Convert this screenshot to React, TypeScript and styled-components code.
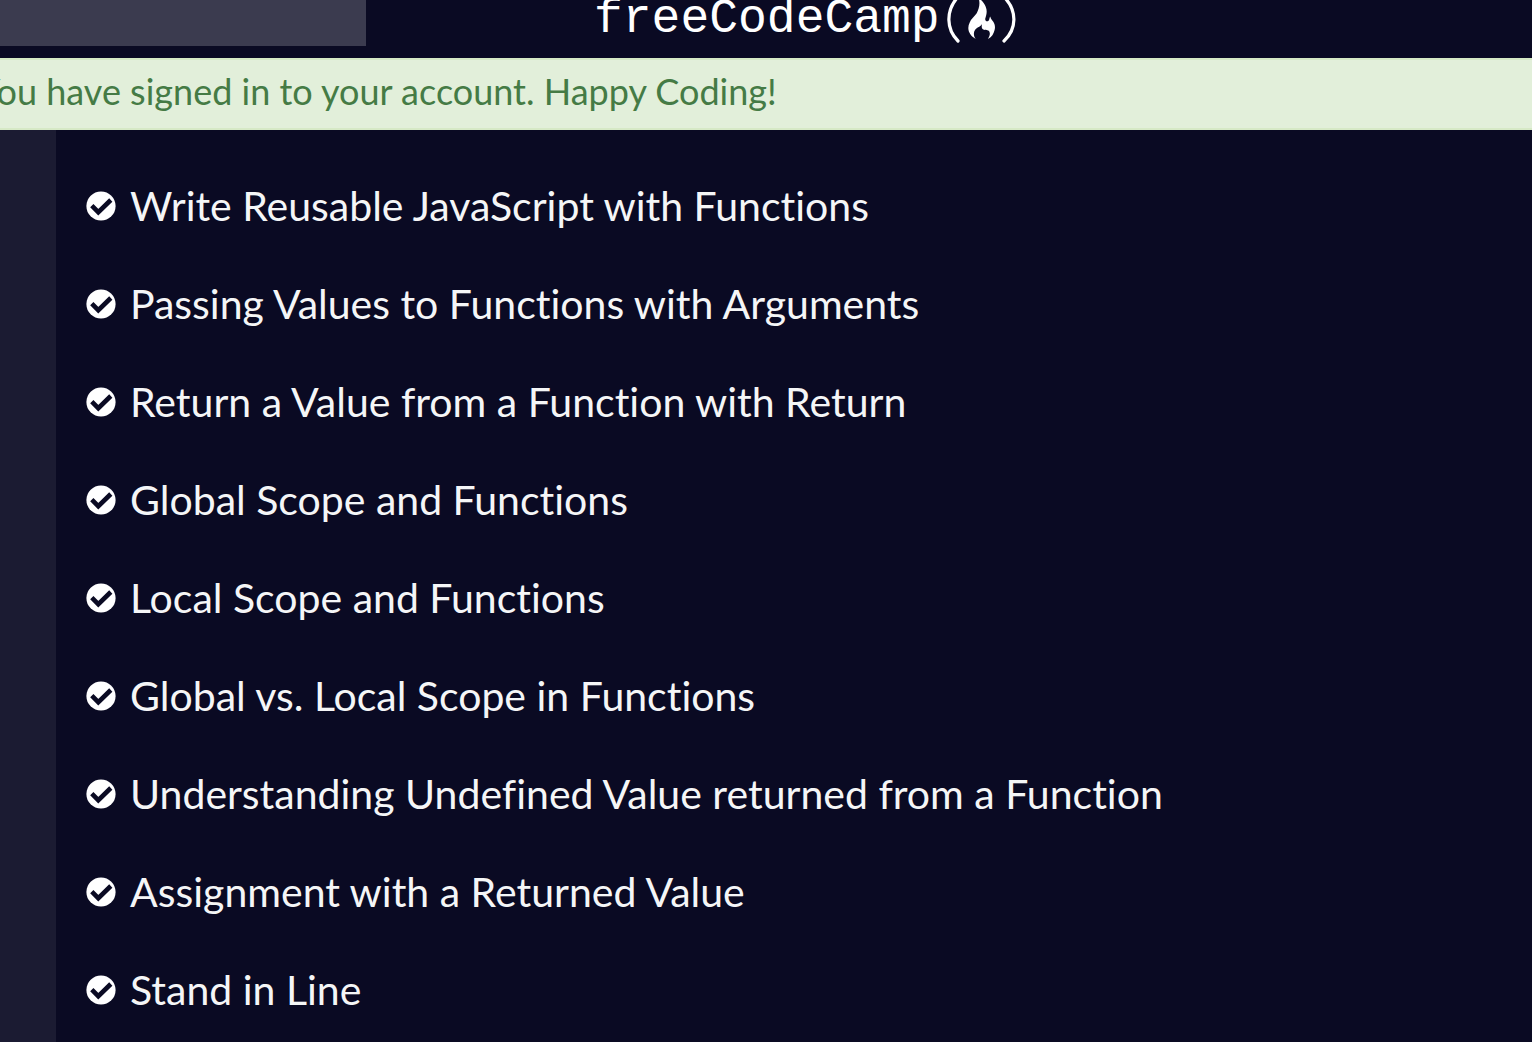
import React from "react";
import styled, { createGlobalStyle } from "styled-components";

const GlobalStyle = createGlobalStyle`
  *, *::before, *::after { box-sizing: border-box; }
  body {
    margin: 0;
    background: #0a0a23;
    color: #f5f6f7;
    font-family: Lato, "Open Sans", sans-serif;
    font-variant-ligatures: no-common-ligatures;
  }
`;

const Page = styled.div`
  display: flex;
  flex-direction: column;
  min-height: 100vh;
  overflow: hidden;
`;

const Header = styled.header`
  display: grid;
  grid-template-columns: 366px 1fr;
  column-gap: 228px;
  height: 58px;
  overflow: hidden;
`;

const SearchInput = styled.input`
  width: 100%;
  height: 46px;
  padding: 0 16px;
  border: 0;
  border-radius: 0;
  background: #3b3b4f;
  color: #ffffff;
  font: 36px Lato, sans-serif;
  outline: 0;
`;

const LogoLink = styled.a`
  display: flex;
  align-items: flex-start;
  height: 46px;
  gap: 6px;
  color: #ffffff;
  text-decoration: none;
`;

const Wordmark = styled.span`
  font-family: "Liberation Mono", monospace;
  font-size: 48px;
  line-height: 38px;
`;

const Emblem = styled.svg`
  flex: none;
  width: 76px;
  height: 46px;
`;

const Flash = styled.div`
  height: 72px;
  overflow: hidden;
  border: solid #d6e9c6;
  border-width: 2px 0;
  background: #e2efda;
  color: #457b45;
  font-size: 36px;
  line-height: 62px;
  white-space: nowrap;
`;

const FlashText = styled.p`
  margin: 0 0 0 -22px;
`;

const Main = styled.main`
  display: flex;
  flex: 1;
  border-left: 56px solid #1b1b32;
`;

const ChallengeList = styled.ul`
  flex: 1;
  margin: 0;
  padding: 27px 30px 0;
  list-style: none;
`;

const ChallengeLink = styled.a`
  display: flex;
  align-items: center;
  gap: 14px;
  height: 98px;
  color: #f5f6f7;
  font-size: 41px;
  line-height: 60px;
  text-decoration: none;
  white-space: nowrap;
`;

const CheckIcon = styled.svg`
  flex: none;
  width: 30px;
  height: 30px;
`;

const challenges = [
  "Write Reusable JavaScript with Functions",
  "Passing Values to Functions with Arguments",
  "Return a Value from a Function with Return",
  "Global Scope and Functions",
  "Local Scope and Functions",
  "Global vs. Local Scope in Functions",
  "Understanding Undefined Value returned from a Function",
  "Assignment with a Returned Value",
  "Stand in Line",
];

function Passed() {
  return (
    <CheckIcon viewBox="0 0 30 30" aria-hidden="true">
      <circle cx="15" cy="15" r="14.6" fill="#ffffff" />
      <path d="M5.8 14.6 L12.3 21.2 L24.8 9" fill="none" stroke="#0a0a23" strokeWidth="4.6" />
    </CheckIcon>
  );
}

function Fire() {
  return (
    <Emblem viewBox="0 0 76 46" aria-hidden="true">
      <g fill="none" stroke="#ffffff" strokeWidth="3.2" strokeLinecap="round">
        <path d="M11 -2 C0 11 0 29 12 41" />
        <path d="M59 -2 C71 11 71 29 58 41" />
      </g>
      <path
        d="M32 -3 C34.500 2 33.500 8 30.700 13.300 C28 17 25 19 23.700 22.500 C20.500 29 23 35 29.700 39 C27.500 36 27.300 32.500 29 30 C31 27 34.500 27 36 24 C35.500 27 35.500 28.500 37.300 29.600 C39.500 30.500 42 29.500 43.300 31.500 C44.500 34 43.500 36 42 39 C46 37 47.500 34 48.600 30 C49.500 26.500 48.700 24 47.300 21.700 C46 19.800 44.600 19 44.300 16.500 C43.200 17.500 43.700 20 42.300 21 C40.500 22 38.800 20.500 39.300 18.500 C40.500 15 41.500 11 39.700 6.700 C38.500 3 35 0 32 -3 Z"
        fill="#ffffff"
      />
    </Emblem>
  );
}

export default function App() {
  return (
    <Page>
      <GlobalStyle />
      <Header>
        <SearchInput type="search" aria-label="Search" />
        <LogoLink href="#">
          <Wordmark>freeCodeCamp</Wordmark>
          <Fire />
        </LogoLink>
      </Header>
      <Flash role="status">
        <FlashText>You have signed in to your account. Happy Coding!</FlashText>
      </Flash>
      <Main>
        <ChallengeList>
          {challenges.map((title) => (
            <li key={title}>
              <ChallengeLink href="#">
                <Passed />
                {title}
              </ChallengeLink>
            </li>
          ))}
        </ChallengeList>
      </Main>
    </Page>
  );
}
